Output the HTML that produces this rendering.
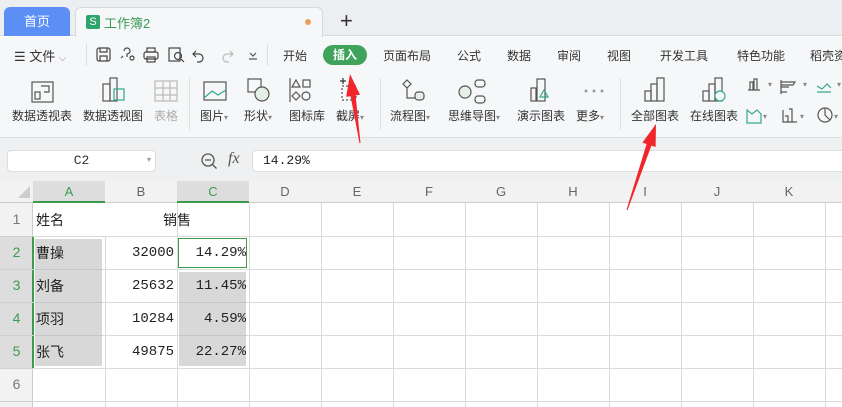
<!DOCTYPE html><html><head><meta charset="utf-8"><style>
*{margin:0;padding:0;box-sizing:border-box}
body{width:842px;height:407px;overflow:hidden;background:#fff;font-family:"Liberation Sans","Noto Sans CJK SC",sans-serif;position:relative;font-size:12px;color:#333}
.a{position:absolute}
.t{position:absolute;white-space:nowrap}
.col{position:absolute;top:181px;height:22px;line-height:22px;text-align:center;color:#666;font-size:13px}
.rh{position:absolute;left:0;width:33px;text-align:center;color:#777;font-size:14px}
.lbl{position:absolute;top:107px;font-size:12px;color:#333;white-space:nowrap}
.cell{position:absolute;font-size:14px;color:#222}
.num{font-family:"Liberation Mono",monospace;font-size:14px;text-align:right}
</style></head><body>
<div class="a" style="left:0;top:0;width:842px;height:36px;background:#eceef1;border-bottom:1px solid #d6d8db"></div>
<div class="a" style="left:4px;top:7px;width:66px;height:29px;background:#5b8ff5;border-radius:6px 6px 0 0;color:#fff;text-align:center;line-height:29px;font-size:13px">首页</div>
<div class="a" style="left:75px;top:7px;width:248px;height:30px;background:#f6f7f8;border:1px solid #d6d8db;border-bottom:none;border-radius:6px 6px 0 0"></div>
<div class="a" style="left:86px;top:15px;width:14px;height:14px;background:#2ea66b;border-radius:2px;color:#fff;font-size:11px;text-align:center;line-height:14px">S</div>
<div class="t" style="left:104px;top:13px;color:#3b9a57;font-size:13px">工作簿2</div>
<div class="a" style="left:305px;top:19px;width:6px;height:6px;border-radius:50%;background:#e8a060"></div>
<div class="t" style="left:340px;top:8px;font-size:22px;color:#333">+</div>
<div class="a" style="left:0;top:37px;width:842px;height:100px;background:#f6f7f8"></div>
<div class="t" style="left:14px;top:46px;font-size:13px">☰ 文件 <span style="color:#888;font-size:10px">⌵</span></div>
<div class="a" style="left:86px;top:44px;width:1px;height:22px;background:#ddd"></div>
<svg class="a" style="left:92px;top:44px" width="175" height="22" fill="none" stroke="#444" stroke-width="1.2">
<rect x="5" y="4" width="13" height="13" rx="2"/><path d="M8 4v4h7V4M8 17v-5h7v5"/>
<path d="M32 7a3 3 0 1 1 3 3v3M31 12l-2 2M38 14a2 2 0 1 1 0 .1"/>
<rect x="52" y="8" width="14" height="7" rx="2"/><rect x="55" y="4" width="8" height="4"/><rect x="55" y="13" width="8" height="5"/>
<rect x="77" y="4" width="11" height="13"/><circle cx="86" cy="12" r="3.5"/><path d="M89 15l3 3"/>
<path d="M104 7l-3 3 3 3M101 10h6a4 4 0 0 1 0 8h-2"/>
<path d="M138 7l3 3-3 3M141 10h-6a4 4 0 0 0 0 8h2" stroke="#bbb"/>
<path d="M158 9l3 3 3-3M157 15h8" stroke="#555"/>
</svg>
<div class="a" style="left:267px;top:44px;width:1px;height:22px;background:#ddd"></div>
<div class="t" style="left:283px;top:47px;font-size:12px">开始</div>
<div class="a" style="left:323px;top:45px;width:44px;height:20px;background:#3fa35b;border-radius:10px;color:#fff;text-align:center;line-height:20px;font-size:12px;font-weight:bold">插入</div>
<div class="t" style="left:383px;top:47px;font-size:12px">页面布局</div>
<div class="t" style="left:457px;top:47px">公式</div>
<div class="t" style="left:507px;top:47px">数据</div>
<div class="t" style="left:557px;top:47px">审阅</div>
<div class="t" style="left:607px;top:47px">视图</div>
<div class="t" style="left:660px;top:47px">开发工具</div>
<div class="t" style="left:737px;top:47px">特色功能</div>
<div class="t" style="left:810px;top:47px">稻壳资</div>
<svg class="a" style="left:0;top:74px" width="842" height="32" fill="none" stroke="#555" stroke-width="1.2">
<rect x="32" y="8" width="21" height="20"/><rect x="35" y="18" width="5" height="7"/><path d="M41 12h8v6h-5"/>
<rect x="103" y="10" width="7" height="17"/><rect x="110" y="4" width="7" height="23"/><rect x="114" y="15" width="10" height="11" stroke="#3a8"/>
<rect x="155" y="7" width="22" height="20" stroke="#bbb"/><path d="M155 14h22M155 21h22M163 7v20M170 7v20" stroke="#bbb"/>
<rect x="204" y="8" width="22" height="18"/><path d="M204 24l8-7 6 4 8-5" stroke="#3a8"/>
<rect x="248" y="5" width="13" height="13"/><circle cx="262" cy="20" r="7" fill="#e5efe8"/>
<path d="M296 6l4 7h-8z"/><rect x="303" y="6" width="7" height="7"/><path d="M296 18l4 4-4 4-4-4z"/><circle cx="306" cy="22" r="4"/><path d="M290 4v24"/>
<path d="M343 4v6M340 7h6" stroke="#333"/><rect x="342" y="12" width="14" height="14" stroke-dasharray="2 2"/>
<path d="M407 6l4 4-4 4-4-4z M407 14v10h12"/><rect x="415" y="18" width="9" height="8" rx="3" fill="#e5efe8"/>
<circle cx="465" cy="18" r="6" fill="#e5efe8"/><rect x="475" y="6" width="10" height="7" rx="3"/><rect x="475" y="22" width="10" height="7" rx="3"/>
<rect x="531" y="14" width="5" height="13"/><rect x="537" y="5" width="8" height="22"/><path d="M544 16l-4 7h8z" stroke="#3a8"/>
<circle cx="586" cy="17" r="1.5" fill="#999" stroke="none"/><circle cx="594" cy="17" r="1.5" fill="#999" stroke="none"/><circle cx="602" cy="17" r="1.5" fill="#999" stroke="none"/>
<rect x="645" y="17" width="6" height="10"/><rect x="651" y="10" width="6" height="17"/><rect x="657" y="4" width="7" height="23"/>
<rect x="703" y="17" width="6" height="10"/><rect x="709" y="10" width="6" height="17"/><rect x="715" y="4" width="7" height="23"/><circle cx="720" cy="22" r="5" stroke="#3a8" fill="#f6f7f8"/>
<path d="M748 16h12M750 16V8h3v8M754 16V5h3v11"/><path d="M781 8h14l-2 3h-12M781 13h8M781 18h6M781 6v14"/><path d="M817 12l5 3 5-5 4 4M817 18h14" stroke="#3a8"/>
</svg>
<svg class="a" style="left:745px;top:104px" width="97" height="22" fill="none" stroke="#555" stroke-width="1.2">
<path d="M2 6l5 4 5-4 4 4v9H2z" stroke="#3a8"/><path d="M38 6v12h14M40 12h3v6M44 5h3v13"/><circle cx="80" cy="11" r="7"/><path d="M80 4v7l5 5"/>
<text x="18" y="15" fill="#888" stroke="none" font-size="8">▾</text><text x="55" y="15" fill="#888" stroke="none" font-size="8">▾</text><text x="89" y="15" fill="#888" stroke="none" font-size="8">▾</text>
</svg>
<div class="t" style="left:768px;top:80px;font-size:8px;color:#888">▾</div><div class="t" style="left:803px;top:80px;font-size:8px;color:#888">▾</div><div class="t" style="left:837px;top:80px;font-size:8px;color:#888">▾</div>
<div class="lbl" style="left:12px">数据透视表</div>
<div class="lbl" style="left:83px">数据透视图</div>
<div class="lbl" style="left:154px;color:#aaa">表格</div>
<div class="a" style="left:189px;top:78px;width:1px;height:52px;background:#e0e0e0"></div>
<div class="lbl" style="left:200px">图片<span style="font-size:8px;color:#888">▾</span></div>
<div class="lbl" style="left:244px">形状<span style="font-size:8px;color:#888">▾</span></div>
<div class="lbl" style="left:289px">图标库</div>
<div class="lbl" style="left:336px">截屏<span style="font-size:8px;color:#888">▾</span></div>
<div class="a" style="left:380px;top:78px;width:1px;height:52px;background:#e0e0e0"></div>
<div class="lbl" style="left:390px">流程图<span style="font-size:8px;color:#888">▾</span></div>
<div class="lbl" style="left:448px">思维导图<span style="font-size:8px;color:#888">▾</span></div>
<div class="lbl" style="left:517px">演示图表</div>
<div class="lbl" style="left:576px">更多<span style="font-size:8px;color:#888">▾</span></div>
<div class="a" style="left:620px;top:78px;width:1px;height:52px;background:#e0e0e0"></div>
<div class="lbl" style="left:631px">全部图表</div>
<div class="lbl" style="left:690px">在线图表</div>
<div class="a" style="left:0;top:137px;width:842px;height:44px;background:#eff0f1;border-top:1px solid #ddd"></div>
<div class="a" style="left:7px;top:150px;width:149px;height:22px;background:#fff;border:1px solid #ddd;border-radius:4px;text-align:center;line-height:20px;font-family:'Liberation Mono',monospace;font-size:13px;color:#333">C2<span style="position:absolute;right:4px;font-size:8px;color:#999">▾</span></div>
<svg class="a" style="left:200px;top:152px" width="18" height="18" fill="none" stroke="#555" stroke-width="1.3"><circle cx="8" cy="8" r="6"/><path d="M5 8h6M12.5 12.5l4 4"/></svg>
<div class="t" style="left:228px;top:150px;font-size:16px;font-style:italic;font-family:'Liberation Serif',serif;color:#555">fx</div>
<div class="a" style="left:252px;top:150px;width:600px;height:22px;background:#fff;border:1px solid #ddd;border-radius:4px;padding-left:10px;line-height:20px;font-family:'Liberation Mono',monospace;font-size:13px;color:#222">14.29%</div>
<div class="a" style="left:0;top:181px;width:842px;height:22px;background:#f2f2f2;border-bottom:1px solid #ccc"></div>
<div class="a" style="left:33px;top:181px;width:72px;height:22px;background:#ddd;border-bottom:2px solid #3d9b4d"></div>
<div class="a" style="left:177px;top:181px;width:72px;height:22px;background:#ddd;border-bottom:2px solid #3d9b4d"></div>
<svg class="a" style="left:18px;top:186px" width="12" height="12"><path d="M12 0v12H0z" fill="#ccc"/></svg>
<div class="col" style="left:33px;width:72px;color:#3d9b4d">A</div>
<div class="col" style="left:105px;width:72px">B</div>
<div class="col" style="left:177px;width:72px;color:#3d9b4d">C</div>
<div class="col" style="left:249px;width:72px">D</div><div class="col" style="left:321px;width:72px">E</div><div class="col" style="left:393px;width:72px">F</div><div class="col" style="left:465px;width:72px">G</div><div class="col" style="left:537px;width:72px">H</div><div class="col" style="left:609px;width:72px">I</div><div class="col" style="left:681px;width:72px">J</div><div class="col" style="left:753px;width:72px">K</div>
<div class="a" style="left:0;top:203px;width:33px;height:204px;background:#f2f2f2;border-right:1px solid #ccc"></div>
<div class="a" style="left:0;top:236px;width:33px;height:132px;background:#ddd"></div>
<div class="a" style="left:32px;top:236px;width:2px;height:132px;background:#3d9b4d"></div>
<svg class="a" style="left:33px;top:203px" width="809" height="204" stroke="#dadada" stroke-width="1">
<path d="M72.5 0v204M144.5 0v204M216.5 0v204M288.5 0v204M360.5 0v204M432.5 0v204M504.5 0v204M576.5 0v204M648.5 0v204M720.5 0v204M792.5 0v204"/>
<path d="M0 33.5h809M0 66.5h809M0 99.5h809M0 132.5h809M0 165.5h809M0 198.5h809"/>
</svg>
<svg class="a" style="left:0;top:203px" width="33" height="204" stroke="#d0d0d0"><path d="M0 33.5h33M0 66.5h33M0 99.5h33M0 132.5h33M0 165.5h33M0 198.5h33"/></svg>
<div class="a" style="left:72px;top:203px;width:105px;height:33px;background:#fff"></div>
<div class="a" style="left:35px;top:239px;width:67px;height:127px;background:#d8d8d8"></div>
<div class="a" style="left:179px;top:272px;width:67px;height:94px;background:#d8d8d8"></div>
<svg class="a" style="left:35px;top:236px" width="67" height="132" stroke="#c6c6c6"><path d="M0 33.5h67M0 66.5h67M0 99.5h67"/></svg>
<svg class="a" style="left:179px;top:269px" width="67" height="99" stroke="#c6c6c6"><path d="M0 33.5h67M0 66.5h67"/></svg>
<div class="a" style="left:178px;top:238px;width:69px;height:30px;border:1px solid #3d9b4d;background:#fff"></div>
<div class="rh" style="top:211px">1</div>
<div class="rh" style="top:244px;color:#3d9b4d">2</div>
<div class="rh" style="top:277px;color:#3d9b4d">3</div>
<div class="rh" style="top:310px;color:#3d9b4d">4</div>
<div class="rh" style="top:343px;color:#3d9b4d">5</div>
<div class="rh" style="top:376px">6</div>
<div class="cell" style="left:36px;top:210px">姓名</div>
<div class="cell" style="left:163px;top:210px">销售</div>
<div class="cell" style="left:36px;top:243px">曹操</div>
<div class="cell" style="left:36px;top:276px">刘备</div>
<div class="cell" style="left:36px;top:309px">项羽</div>
<div class="cell" style="left:36px;top:342px">张飞</div>
<div class="cell num" style="left:105px;width:69px;top:245px">32000</div>
<div class="cell num" style="left:105px;width:69px;top:278px">25632</div>
<div class="cell num" style="left:105px;width:69px;top:311px">10284</div>
<div class="cell num" style="left:105px;width:69px;top:344px">49875</div>
<div class="cell num" style="left:177px;width:69px;top:245px">14.29%</div>
<div class="cell num" style="left:177px;width:69px;top:278px">11.45%</div>
<div class="cell num" style="left:177px;width:69px;top:311px">4.59%</div>
<div class="cell num" style="left:177px;width:69px;top:344px">22.27%</div>
<svg class="a" style="left:0;top:0" width="842" height="407">
<polygon points="350,74 360,94.8 355.6,95.4 360.5,143 359.5,143 350.6,96.2 346.2,96.8" fill="#f0262b"/>
<polygon points="656,124 655.6,147 651.4,145.6 627.5,210.2 626.5,209.8 646.6,144 642.4,142.6" fill="#f0262b"/>
</svg>
</body></html>
